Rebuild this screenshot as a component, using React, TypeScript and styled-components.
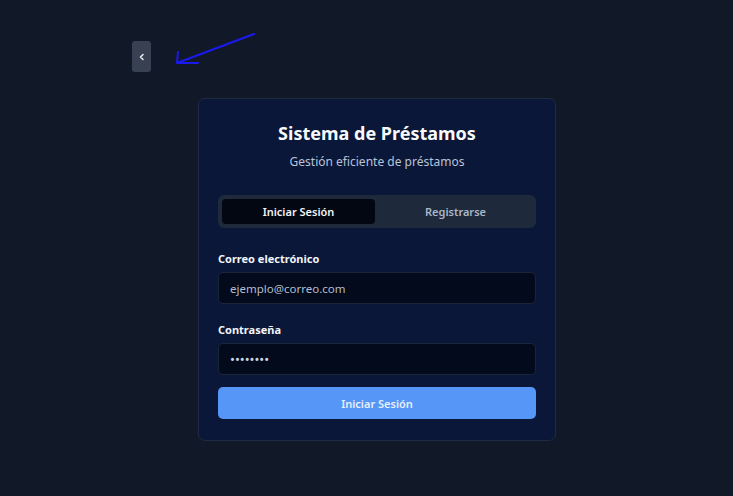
import React from 'react'
import styled, { createGlobalStyle } from 'styled-components'

const GlobalStyle = createGlobalStyle`
  html, body {
    margin: 0;
    padding: 0;
    background: #111827;
    font-family: 'Noto Sans', 'Open Sans', sans-serif;
  }
`

const Page = styled.div`
  position: relative;
  width: 733px;
  height: 496px;
  background: #111827;
  display: flex;
  flex-direction: column;
  align-items: flex-start;
`

const Toolbar = styled.div`
  padding: 41px 0 0 132px;
  height: 57px;
  box-sizing: border-box;
`

const CollapseButton = styled.button`
  width: 19px;
  height: 31px;
  border: none;
  border-radius: 3px;
  background: #374151;
  color: #e5e7eb;
  display: flex;
  align-items: center;
  justify-content: center;
  padding: 0;
`

const Annotation = styled.svg`
  position: absolute;
  left: 170px;
  top: 30px;
`

const Center = styled.div`
  width: 100%;
  display: flex;
  justify-content: center;
  padding-top: 41px;
  padding-left: 21px;
  box-sizing: border-box;
`

const Card = styled.div`
  width: 358px;
  box-sizing: border-box;
  background: #0b1738;
  border: 1px solid #1f2b45;
  border-radius: 7px;
  padding: 22px 19px 21px;
`

const Title = styled.h1`
  margin: 0;
  text-align: center;
  color: #f8fafc;
  font-size: 18px;
  font-weight: 700;
  line-height: 24px;
`

const Subtitle = styled.p`
  margin: 8px 0 0;
  text-align: center;
  color: #b8c4d8;
  font-size: 12px;
  line-height: 18px;
`

const Tabs = styled.div`
  margin-top: 24px;
  display: grid;
  grid-template-columns: 1fr 1fr;
  gap: 4px;
  padding: 4px;
  height: 33px;
  box-sizing: border-box;
  background: #1e293b;
  border-radius: 6px;
`

const Tab = styled.div<{ $active?: boolean }>`
  display: flex;
  align-items: center;
  justify-content: center;
  border-radius: 4px;
  font-size: 11px;
  font-weight: 600;
  color: ${p => (p.$active ? '#f1f5f9' : '#aab6c8')};
  background: ${p => (p.$active ? '#030712' : 'transparent')};
`

const Field = styled.div`
  margin-top: 24px;
  display: flex;
  flex-direction: column;
  gap: 6px;
  & + & {
    margin-top: 19px;
  }
`

const Label = styled.label`
  font-size: 11px;
  font-weight: 700;
  color: #f1f5f9;
  line-height: 14px;
`

const Input = styled.div<{ $dots?: boolean }>`
  height: 32px;
  box-sizing: border-box;
  border: 1px solid #1b2538;
  border-radius: 5px;
  background: #030a1b;
  padding: 0 11px;
  display: flex;
  align-items: center;
  font-size: ${p => (p.$dots ? '13px' : '11.5px')};
  color: ${p => (p.$dots ? '#cbd5e1' : '#b3bdcc')};
`

const SubmitButton = styled.button`
  margin-top: 12px;
  width: 100%;
  height: 32px;
  border: none;
  border-radius: 5px;
  background: #5596f7;
  color: #e8effc;
  font-family: inherit;
  font-size: 11px;
  font-weight: 600;
`

export default function App() {
  return (
    <>
      <GlobalStyle />
      <Page>
        <Toolbar>
          <CollapseButton>
            <svg width="8" height="8" viewBox="0 0 8 8">
              <path d="M5 1.5 L2.5 4 L5 6.5" stroke="#e5e7eb" strokeWidth="1.6" fill="none" strokeLinecap="round" strokeLinejoin="round" />
            </svg>
          </CollapseButton>
        </Toolbar>
        <Annotation width="90" height="45" viewBox="0 0 90 45">
          <path d="M84 4 L7 33 M7 33 L8 22 M7 33 L28 33" stroke="#1a1af0" strokeWidth="2" fill="none" strokeLinecap="round" />
        </Annotation>
        <Center>
          <Card>
            <Title>Sistema de Préstamos</Title>
            <Subtitle>Gestión eficiente de préstamos</Subtitle>
            <Tabs>
              <Tab $active>Iniciar Sesión</Tab>
              <Tab>Registrarse</Tab>
            </Tabs>
            <Field>
              <Label>Correo electrónico</Label>
              <Input>ejemplo@correo.com</Input>
            </Field>
            <Field>
              <Label>Contraseña</Label>
              <Input $dots>••••••••</Input>
            </Field>
            <SubmitButton>Iniciar Sesión</SubmitButton>
          </Card>
        </Center>
      </Page>
    </>
  )
}
